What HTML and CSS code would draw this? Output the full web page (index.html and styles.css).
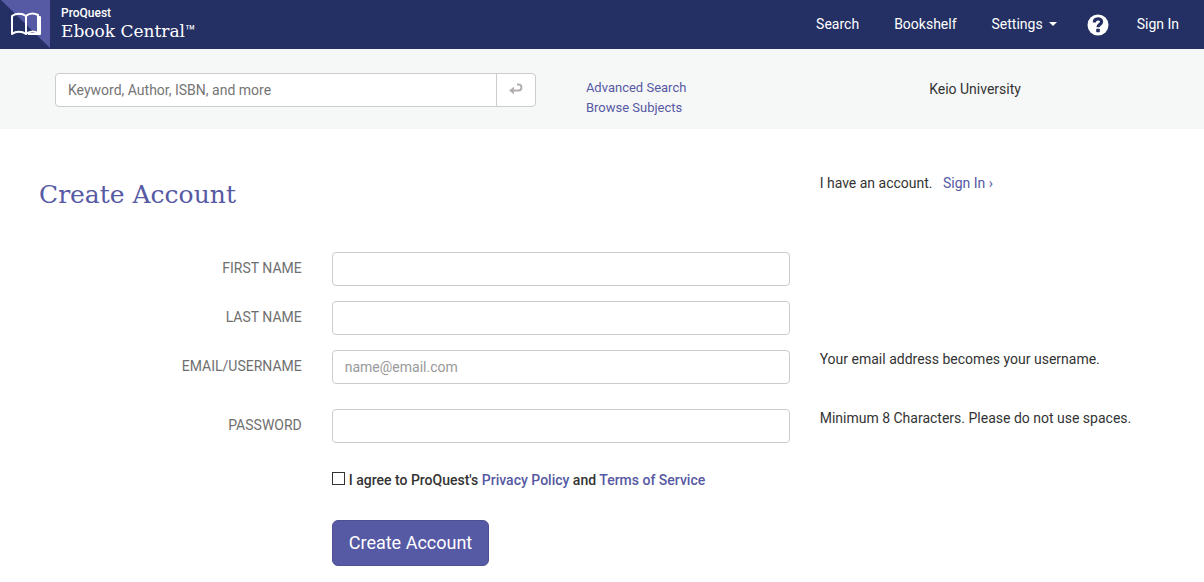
FILE: index.html
```html
<!DOCTYPE html>
<html lang="en">
<head>
    <meta charset="UTF-8">
    <meta name="viewport" content="width=device-width, initial-scale=1.0">
    <title>Create Account - Ebook Central</title>
    <link rel="stylesheet" href="styles.css">
</head>
<body>
<header class="navbar">
    <a class="brand" href="#">
        <svg class="brand-icon" width="50" height="49" viewBox="0 0 50 49" aria-hidden="true">
            <path d="M1 0H50V48Z" fill="#5659a3"/>
            <g fill="none" stroke="#fff" stroke-width="2" stroke-linejoin="round">
                <path d="M26 16C22 13 16 13 12 16V34C16 31 22 31 26 34C29 31 34 31 38 33V15C34 13 29 13 26 16V34"/>
                <path d="M38 17H40V34H28"/>
            </g>
        </svg>
        <span class="brand-text">
            <span class="brand-small">ProQuest</span>
            <span class="brand-name">Ebook Central<span class="tm">™</span></span>
        </span>
    </a>
    <nav class="nav">
        <a href="#">Search</a>
        <a href="#">Bookshelf</a>
        <a class="dropdown" href="#">Settings <span class="caret"></span></a>
        <a class="help" href="#" aria-label="Help">
            <svg width="22" height="22" viewBox="0 0 22 22" aria-hidden="true">
                <circle cx="11" cy="11" r="10.5" fill="#fff"/>
                <path d="M7.3 8.4C7.3 3.6 14.6 3.8 14.6 7.8C14.6 10.5 11 10.2 11 13.2" fill="none" stroke="#243063" stroke-width="3.2"/>
                <rect x="9.2" y="14.8" width="3.6" height="3.4" rx="0.8" fill="#243063"/>
            </svg>
        </a>
        <a href="#">Sign In</a>
    </nav>
</header>

<div class="search-bar">
    <form class="search-form">
        <input type="text" class="search-input" placeholder="Keyword, Author, ISBN, and more" aria-label="Search">
        <button type="button" class="search-btn" aria-label="Submit search">
            <svg width="14" height="12" viewBox="0 0 14 12" aria-hidden="true">
                <path d="M8 1.5H9.5C13.4 1.5 13.4 7.5 9.5 7.5H4" fill="none" stroke="#b5afb2" stroke-width="2"/>
                <path d="M0 7.5L5 3.7V11.3Z" fill="#b5afb2"/>
            </svg>
        </button>
    </form>
    <div class="search-links">
        <a href="#">Advanced Search</a>
        <a href="#">Browse Subjects</a>
    </div>
    <div class="library">Keio University</div>
</div>

<main class="content">
    <div class="row heading">
        <h1>Create Account</h1>
        <p class="have-account">I have an account. <a href="#">Sign In ›</a></p>
    </div>
    <form>
        <div class="row">
            <label for="first_name">FIRST NAME</label>
            <input type="text" id="first_name" name="first_name">
        </div>
        <div class="row">
            <label for="last_name">LAST NAME</label>
            <input type="text" id="last_name" name="last_name">
        </div>
        <div class="row tall">
            <label for="email">EMAIL/USERNAME</label>
            <input type="email" id="email" name="email" placeholder="name@email.com">
            <p class="hint">Your email address becomes your username.</p>
        </div>
        <div class="row tall">
            <label for="password">PASSWORD</label>
            <input type="password" id="password" name="password">
            <p class="hint">Minimum 8 Characters. Please do not use spaces.</p>
        </div>
        <div class="row">
            <div class="actions">
                <div class="agree">
                    <input type="checkbox" id="agree" name="agree">
                    <label for="agree">I agree to ProQuest's <a href="#">Privacy Policy</a> and <a href="#">Terms of Service</a></label>
                </div>
                <button type="button" class="submit">Create Account</button>
            </div>
        </div>
    </form>
</main>
</body>
</html>
```
FILE: styles.css
```css
* {
    box-sizing: border-box;
}
body {
    margin: 0;
    background-color: #fff;
    color: #333;
    font-family: Roboto, sans-serif;
    font-size: 14px;
    line-height: 20px;
}
a {
    color: #5659a3;
    text-decoration: none;
}
p,
h1 {
    margin: 0;
}
input,
button {
    font-family: inherit;
    font-size: 14px;
}

/* top bar */
.navbar {
    display: flex;
    justify-content: space-between;
    background-color: #243063;
    height: 49px;
}
.brand {
    display: flex;
    gap: 11px;
    color: #fff;
}
.brand-icon {
    display: block;
}
.brand-text {
    display: flex;
    flex-direction: column;
    padding-top: 6px;
}
.brand-small {
    font-size: 12px;
    font-weight: 500;
    line-height: 14px;
}
.brand-name {
    font-family: "DejaVu Serif", serif;
    font-size: 17px;
    line-height: 22px;
}
.tm {
    font-family: Roboto, sans-serif;
}
.nav {
    display: flex;
    align-items: center;
    gap: 35px;
    padding: 0 25px 2px 0;
}
.nav a {
    color: #fff;
}
.nav .dropdown {
    display: flex;
    align-items: center;
    gap: 6px;
    margin-right: -5px;
}
.caret {
    border-top: 4px solid #fff;
    border-left: 4px solid transparent;
    border-right: 4px solid transparent;
}
.nav .help {
    display: flex;
    padding-top: 2px;
    margin-right: -7px;
}

/* search */
.search-bar {
    display: grid;
    grid-template-columns: 41fr 25fr 19fr;
    column-gap: 50px;
    align-items: center;
    background-color: #f6f8f8;
    padding: 20px 52px 10px 55px;
}
.search-form {
    display: flex;
    height: 34px;
    margin-bottom: 8px;
}
.search-input {
    flex: 1;
    min-width: 0;
    border: 1px solid #ccc;
    border-radius: 4px 0 0 4px;
    padding: 6px 12px;
}
.search-input::placeholder {
    color: #757575;
}
.search-btn {
    width: 40px;
    margin-left: -1px;
    padding: 0;
    background-color: #fff;
    border: 1px solid #ccc;
    border-radius: 0 4px 4px 0;
}
.search-links {
    display: flex;
    flex-direction: column;
    padding: 9px 0 1px;
    font-size: 13px;
}
.library {
    margin-bottom: 10px;
}

/* form */
.content {
    padding: 44px 24px 16px 39px;
}
.row {
    display: grid;
    grid-template-columns: repeat(12, 1fr);
    column-gap: 30px;
    margin-bottom: 15px;
}
.row.tall {
    margin-bottom: 25px;
}
.heading {
    margin-bottom: 35px;
}
h1 {
    grid-column: 1 / 9;
    color: #5659a3;
    font-family: "DejaVu Serif", serif;
    font-size: 25px;
    font-weight: normal;
    line-height: 44px;
}
.have-account {
    grid-column: 9 / 13;
}
.have-account a {
    margin-left: 7px;
}
.row > label {
    grid-column: 1 / 4;
    padding-top: 6px;
    color: #6f6f6f;
    text-align: right;
}
.row > input {
    grid-column: 4 / 9;
    height: 34px;
    min-width: 0;
    border: 1px solid #ccc;
    border-radius: 4px;
    padding: 5px 12px 6px;
}
.row > input::placeholder {
    color: #999;
}
.hint {
    grid-column: 9 / 13;
    line-height: 18px;
}
.actions {
    grid-column: 4 / 10;
}
.agree {
    display: flex;
    align-items: center;
    gap: 4px;
    margin: 2px 0 30px;
    font-weight: 500;
}
.agree input {
    appearance: none;
    width: 13px;
    height: 13px;
    margin: 0 0 3px;
    border: 1px solid #333;
}
.submit {
    height: 46px;
    padding: 0 16px 2px;
    background-color: #5659a3;
    border: 1px solid #4e5093;
    border-radius: 6px;
    color: #fff;
    font-size: 18px;
}
```
